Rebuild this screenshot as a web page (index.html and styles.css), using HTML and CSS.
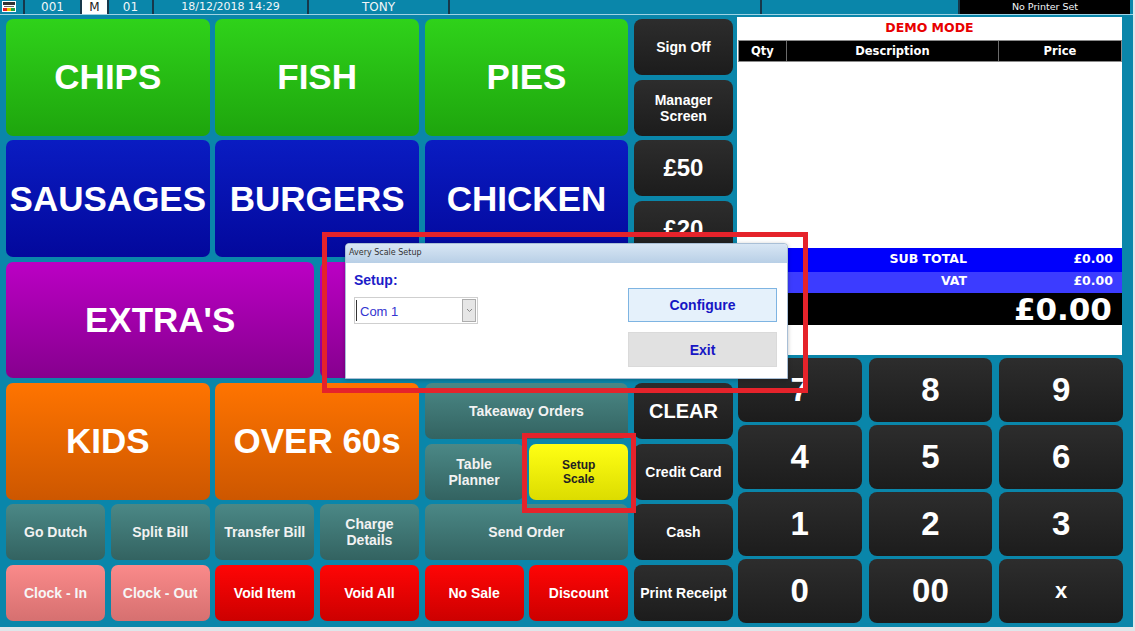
FILE: index.html
```html
<!DOCTYPE html>
<html lang="en">
  <head>
    <meta charset="UTF-8" />
    <title>EPOS</title>
    <link rel="stylesheet" href="styles.css">
  </head>
  <body>
    <div class="app">
      <div class="topbar">
        <div class="cell c-icon">
          <svg width="14" height="11" viewBox="0 0 14 11">
            <rect x="0" y="0" width="14" height="11" fill="#fff"/>
            <rect x="1" y="1" width="12" height="3" fill="#333"/>
            <rect x="2" y="5" width="10" height="1" fill="#666"/>
            <rect x="1" y="7" width="4" height="3" fill="#e02020"/>
            <rect x="5" y="7" width="4" height="3" fill="#f0c000"/>
            <rect x="9" y="7" width="4" height="3" fill="#20a040"/>
          </svg>
        </div>
        <div class="cell c-till">001</div>
        <div class="cell c-mode">M</div>
        <div class="cell c-user">01</div>
        <div class="cell c-date">18/12/2018 14:29</div>
        <div class="cell c-name">TONY</div>
        <div class="cell c-blank1"></div>
        <div class="cell c-blank2"></div>
        <div class="cell c-printer">No Printer Set</div>
      </div>

      <div class="main">
        <div class="keys">
          <button class="key green big w2 h2">CHIPS</button>
          <button class="key green big w2 h2">FISH</button>
          <button class="key green big w2 h2">PIES</button>
          <button class="key black">Sign Off</button>
          <button class="key black">Manager<br>Screen</button>

          <button class="key blue big w2 h2">SAUSAGES</button>
          <button class="key blue big w2 h2">BURGERS</button>
          <button class="key blue big w2 h2">CHICKEN</button>
          <button class="key black money">£50</button>
          <button class="key black money">£20</button>

          <!-- the keys behind the dialog carry no visible label -->
          <button class="key purple big w3 h2">EXTRA'S</button>
          <button class="key purple h2"></button>
          <button class="key purple w2 h2"></button>
          <button class="key black"></button>
          <button class="key black"></button>

          <button class="key orange big w2 h2">KIDS</button>
          <button class="key orange big w2 h2">OVER 60s</button>
          <button class="key slate w2">Takeaway Orders</button>
          <button class="key black clear">CLEAR</button>
          <button class="key slate">Table<br>Planner</button>
          <button class="key yellow">Setup<br>Scale</button>
          <button class="key black">Credit Card</button>

          <button class="key slate">Go Dutch</button>
          <button class="key slate">Split Bill</button>
          <button class="key slate">Transfer Bill</button>
          <button class="key slate">Charge<br>Details</button>
          <button class="key slate w2">Send Order</button>
          <button class="key black">Cash</button>

          <button class="key pink">Clock - In</button>
          <button class="key pink">Clock - Out</button>
          <button class="key red">Void Item</button>
          <button class="key red">Void All</button>
          <button class="key red">No Sale</button>
          <button class="key red">Discount</button>
          <button class="key black">Print Receipt</button>
        </div>

        <div class="side">
          <div class="receipt">
            <div class="demo">DEMO MODE</div>
            <div class="receipt-head">
              <span class="col-qty">Qty</span>
              <span class="col-desc">Description</span>
              <span class="col-price">Price</span>
            </div>
            <div class="receipt-lines"></div>
            <div class="sum-row subtotal">
              <span class="sum-label">SUB TOTAL</span>
              <span class="sum-value">£0.00</span>
            </div>
            <div class="sum-row vat">
              <span class="sum-label">VAT</span>
              <span class="sum-value">£0.00</span>
            </div>
            <div class="total">£0.00</div>
            <div class="receipt-foot"></div>
          </div>

          <div class="numpad">
            <button class="pad">7</button>
            <button class="pad">8</button>
            <button class="pad">9</button>
            <button class="pad">4</button>
            <button class="pad">5</button>
            <button class="pad">6</button>
            <button class="pad">1</button>
            <button class="pad">2</button>
            <button class="pad">3</button>
            <button class="pad">0</button>
            <button class="pad">00</button>
            <button class="pad small">x</button>
          </div>
        </div>
      </div>

      <div class="dialog">
        <div class="dialog-title">Avery Scale Setup</div>
        <div class="dialog-body">
          <div class="dialog-left">
            <div class="setup-label">Setup:</div>
            <div class="combo">
              <span class="combo-text">Com 1</span>
              <span class="combo-btn">
                <svg width="7" height="5" viewBox="0 0 7 5"><path d="M1 1 L3.5 3.5 L6 1" fill="none" stroke="#888" stroke-width="1"/></svg>
              </span>
            </div>
          </div>
          <div class="dialog-right">
            <button class="dlg-btn configure">Configure</button>
            <button class="dlg-btn exit">Exit</button>
          </div>
        </div>
      </div>

      <div class="mark mark-dialog"></div>
      <div class="mark mark-scale"></div>
    </div>
  </body>
</html>
```

FILE: styles.css
```css
* {
  margin: 0;
  padding: 0;
  box-sizing: border-box;
}

body {
  background: #dfe6ea;
  font-family: "Liberation Sans", Arial, sans-serif;
}

.app {
  position: relative;
  width: 1133px;
  height: 627px;
  background: #0a86aa;
  overflow: hidden;
}

/* top status bar */
.topbar {
  display: flex;
  height: 15px;
  border-bottom: 1px solid #9fd3e4;
  font-family: "DejaVu Sans", sans-serif;
  font-size: 11px;
  color: #f2f6f8;
}

.cell {
  height: 14px;
  line-height: 14px;
  text-align: center;
  border-right: 2px solid #17374a;
}

.c-icon {
  width: 25px;
  text-align: left;
  padding: 1px 0 0 2px;
  line-height: 0;
}

.c-till { width: 57px; font-size: 12px; }
.c-mode { width: 27px; background: #fff; color: #222; font-size: 12px; }
.c-user { width: 45px; font-size: 12px; }
.c-date { width: 155px; }
.c-name { width: 141px; font-size: 12px; }
.c-blank1 { width: 312px; }
.c-blank2 { width: 198px; }

.c-printer {
  width: 170px;
  background: #000;
  border-right: none;
  font-size: 9.5px;
}

/* main area */
.main {
  display: flex;
  padding: 2px 0 0 6px;
}

.keys {
  display: grid;
  grid-template-columns: repeat(7, 99px);
  grid-template-rows: repeat(10, 1fr);
  column-gap: 5.67px;
  row-gap: 4.5px;
  height: 602px;
  margin-top: 2px;
}

.key {
  border: none;
  border-radius: 7px;
  color: #fff;
  font-family: "Liberation Sans", Arial, sans-serif;
  font-weight: bold;
  font-size: 14px;
  line-height: 16px;
  text-align: center;
}

.w2 { grid-column: span 2; }
.w3 { grid-column: span 3; }
.h2 { grid-row: span 2; }

.big {
  font-size: 35px;
  line-height: 40px;
}

.green { background: linear-gradient(#2fd21a, #1ea50d); }
.blue { background: linear-gradient(#0a1cc2, #03089c); }
.purple { background: linear-gradient(#bb00c4, #86008e); }
.orange { background: linear-gradient(#ff7400, #cd5700); }
.slate { background: linear-gradient(#4b8886, #336361); color: #f2f2f2; }
.pink { background: linear-gradient(#fa8a8a, #d67070); color: #f6f6f6; }
.red { background: linear-gradient(#ff0505, #cc0000); }
.yellow { background: linear-gradient(#ffff14, #dcdc00); color: #222; font-size: 12px; line-height: 14px; }

.black {
  background: linear-gradient(#2d2d2d, #1c1c1c);
  border-radius: 8px;
}

.money { font-size: 24px; }
.clear { font-size: 20px; }

/* receipt + numpad */
.side {
  width: 386px;
  margin-left: 4px;
}

.receipt {
  width: 385px;
  height: 338px;
  background: #fff;
  font-family: "DejaVu Sans", sans-serif;
  font-weight: bold;
  display: flex;
  flex-direction: column;
}

.demo {
  height: 23px;
  line-height: 22px;
  text-align: center;
  color: #e80000;
  font-size: 12.5px;
}

.receipt-head {
  display: flex;
  height: 22px;
  margin-left: 1px;
  background: #000;
  border: 1px solid #8a8a8a;
  color: #fff;
  font-size: 11.5px;
  line-height: 20px;
}

.receipt-head span {
  text-align: center;
}

.col-qty { width: 48px; border-right: 1px solid #6a6a6a; }
.col-desc { width: 212px; border-right: 1px solid #6a6a6a; }
.col-price { flex: 1; }

.receipt-lines {
  height: 186px;
}

.sum-row {
  display: flex;
  color: #fff;
  font-size: 12.5px;
}

.sum-label {
  width: 230px;
  text-align: right;
}

.sum-value {
  flex: 1;
  text-align: right;
  padding-right: 9px;
}

.subtotal {
  height: 24px;
  line-height: 21px;
  background: #0000fc;
}

.vat {
  height: 21px;
  line-height: 18px;
  background: #3c3cff;
}

.total {
  height: 32px;
  line-height: 33px;
  background: #000;
  color: #fff;
  text-align: right;
  padding-right: 10px;
  font-size: 31px;
}

.receipt-foot {
  flex: 1;
}

.numpad {
  display: grid;
  grid-template-columns: repeat(3, 1fr);
  grid-template-rows: repeat(4, 64px);
  gap: 3px 7px;
  width: 385px;
  margin: 3px 0 0 1px;
}

.pad {
  border: none;
  border-radius: 8px;
  background: linear-gradient(#2d2d2d, #1c1c1c);
  color: #fff;
  font-family: "Liberation Sans", Arial, sans-serif;
  font-weight: bold;
  font-size: 33px;
}

.pad.small {
  font-size: 22px;
}

/* scale setup dialog */
.dialog {
  position: absolute;
  left: 345px;
  top: 243px;
  width: 443px;
  height: 136px;
  background: #fff;
  border: 1px solid #a9bfd6;
  border-radius: 4px 4px 0 0;
  box-shadow: 0 1px 4px rgba(0, 0, 0, 0.25);
}

.dialog-title {
  height: 19px;
  padding-left: 3px;
  line-height: 18px;
  font-family: "DejaVu Sans", sans-serif;
  font-size: 8px;
  color: #333;
  background: linear-gradient(#d8e6f4, #b8cfe6);
  border-radius: 4px 4px 0 0;
}

.dialog-body {
  display: flex;
  justify-content: space-between;
  padding: 0 10px 0 8px;
}

.setup-label {
  margin-top: 9px;
  color: #1c1cc8;
  font-weight: bold;
  font-size: 14px;
}

.combo {
  display: flex;
  width: 124px;
  height: 27px;
  margin-top: 9px;
  border: 1px solid #cfcfcf;
}

.combo-text {
  flex: 1;
  padding-left: 3px;
  line-height: 24px;
  font-size: 13px;
  color: #3434d0;
  border-left: 1px solid #333;
  margin: 2px 0 2px 1px;
}

.combo-btn {
  display: flex;
  align-items: center;
  justify-content: center;
  width: 14px;
  margin: 1px 1px 1px 0;
  background: #e6e6e6;
  border: 1px solid #adadad;
}

.dialog-right {
  display: flex;
  flex-direction: column;
  gap: 10px;
  padding-top: 25px;
}

.dlg-btn {
  width: 149px;
  height: 34px;
  font-family: "Liberation Sans", Arial, sans-serif;
  font-weight: bold;
  font-size: 14px;
  color: #1616c4;
}

.configure {
  background: #e5f1fb;
  border: 1px solid #7eb4e2;
}

.exit {
  height: 35px;
  background: #e1e1e1;
  border: 1px solid #dadada;
}

/* red highlight frames */
.mark {
  position: absolute;
  border: 5px solid #e5232b;
}

.mark-dialog {
  left: 322px;
  top: 232px;
  width: 486px;
  height: 161px;
}

.mark-scale {
  left: 522px;
  top: 433px;
  width: 114px;
  height: 80px;
}
```
